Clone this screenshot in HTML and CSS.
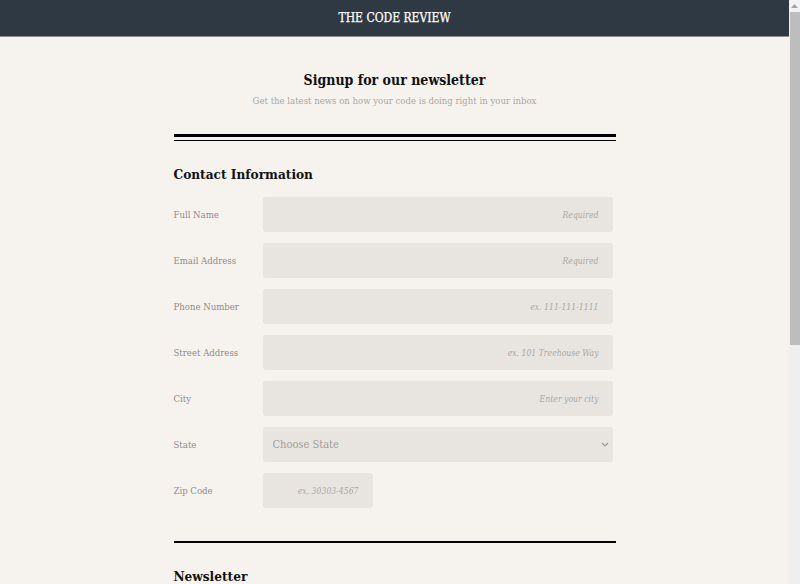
FILE: index.html
```html
<!DOCTYPE html>
<html lang="en">
<head>
<meta charset="utf-8">
<title>The Code Review</title>
<link rel="stylesheet" href="styles.css">
</head>
<body>
<div class="window">
  <div class="viewport">
    <header class="topbar">
      <span class="brand">THE CODE REVIEW</span>
    </header>
    <main class="container">
      <div class="intro">
        <h1 class="title">Signup for our newsletter</h1>
        <p class="subtitle">Get the latest news on how your code is doing right in your inbox</p>
      </div>
      <div class="double-rule"></div>

      <form class="form">
        <section class="section">
          <h2 class="section-title">Contact Information</h2>
          <div class="row">
            <label class="label" for="name">Full Name</label>
            <input class="field" id="name" type="text" placeholder="Required">
          </div>
          <div class="row">
            <label class="label" for="email">Email Address</label>
            <input class="field" id="email" type="email" placeholder="Required">
          </div>
          <div class="row">
            <label class="label" for="phone">Phone Number</label>
            <input class="field" id="phone" type="tel" placeholder="ex. 111-111-1111">
          </div>
          <div class="row">
            <label class="label" for="street">Street Address</label>
            <input class="field" id="street" type="text" placeholder="ex. 101 Treehouse Way">
          </div>
          <div class="row">
            <label class="label" for="city">City</label>
            <input class="field" id="city" type="text" placeholder="Enter your city">
          </div>
          <div class="row">
            <label class="label" for="state">State</label>
            <div class="select-wrap">
              <select class="field select" id="state">
                <option>Choose State</option>
              </select>
              <svg class="chevron" width="8" height="5" viewBox="0 0 8 5"><path d="M1 1 L4 4 L7 1" fill="none" stroke="#9a9692" stroke-width="1.1"/></svg>
            </div>
          </div>
          <div class="row last">
            <label class="label" for="zip">Zip Code</label>
            <input class="field zip" id="zip" type="text" placeholder="ex. 30303-4567">
          </div>
        </section>

        <div class="single-rule"></div>

        <section class="section">
          <h2 class="section-title">Newsletter</h2>
          <p class="question">Select the newsletters you would like to receive</p>
          <ul class="options">
            <li><label><input type="checkbox"> HTML News</label></li>
            <li><label><input type="checkbox"> CSS News</label></li>
            <li><label><input type="checkbox"> Javascript News</label></li>
          </ul>
          <p class="question">Newsletter format</p>
          <ul class="options">
            <li><label><input type="radio" name="fmt"> HTML</label></li>
            <li><label><input type="radio" name="fmt"> Plain text</label></li>
          </ul>
          <p class="question">Other topics you'd like to hear about</p>
          <textarea class="field area"></textarea>
          <button class="submit" type="button">Sign Up</button>
        </section>
      </form>
    </main>
  </div>
  <div class="scrollbar">
    <div class="scroll-btn">
      <svg width="7" height="4" viewBox="0 0 7 4"><path d="M0 4 L3.5 0 L7 4 Z" fill="#a3a3a3"/></svg>
    </div>
    <div class="scroll-thumb"></div>
  </div>
</div>
</body>
</html>
```

FILE: styles.css
```css
* { box-sizing: border-box; }

html, body {
  margin: 0;
  padding: 0;
  overflow: hidden;
}

body {
  background: #f6f3ef;
  font-family: "DejaVu Serif Condensed", "DejaVu Serif", "Liberation Serif", serif;
  color: #111;
}

.window {
  display: flex;
  height: 584px;
}

.viewport {
  flex: 1;
  height: 584px;
  overflow: hidden;
}

.topbar {
  height: 37px;
  background: #2f3943;
  border-bottom: 1px solid #8b9096;
  display: flex;
  align-items: center;
  justify-content: center;
}

.brand {
  color: #fff;
  font-size: 12px;
  -webkit-text-stroke: 0.25px #fff;
}

.container {
  width: 442px;
  margin: 0 auto;
}

.intro {
  text-align: center;
  padding-top: 33px;
}

.title {
  margin: 0;
  font-size: 14px;
  line-height: 20px;
  font-weight: bold;
}

.subtitle {
  margin: 4px 0 0;
  font-size: 9.5px;
  line-height: 14px;
  color: #aaa6a2;
}

.double-rule {
  margin-top: 26px;
  height: 7px;
  border-top: 3px solid #000;
  border-bottom: 1px solid #000;
}

.form {
  margin: 0;
}

.section-title {
  margin: 23px 0 13px;
  font-size: 13.5px;
  line-height: 20px;
  font-weight: bold;
}

.row {
  display: grid;
  grid-template-columns: 89px 350px;
  align-items: center;
  margin-bottom: 11px;
}

.row.last {
  margin-bottom: 0;
}

.label {
  font-size: 9.5px;
  color: #8f8b87;
}

.field {
  display: block;
  width: 100%;
  height: 35px;
  border: none;
  border-radius: 3px;
  background: #e8e5e1;
  font-family: "DejaVu Serif Condensed", "DejaVu Serif", "Liberation Serif", serif;
  font-size: 8.6px;
  padding: 0 14px;
  text-align: right;
  color: #555;
  outline: none;
}

.field::placeholder {
  color: #aaa7a3;
  font-style: italic;
}

.select-wrap {
  position: relative;
}

.select {
  appearance: none;
  -webkit-appearance: none;
  text-align: left;
  padding: 0 10px;
  font-size: 11px;
  color: #a19d99;
}

.chevron {
  position: absolute;
  right: 4px;
  top: 15px;
}

.zip {
  width: 110px;
}

.single-rule {
  margin-top: 33px;
  border-top: 2px solid #000;
}

.question {
  margin: 0 0 10px;
  font-size: 10px;
  color: #8f8b87;
}

.options {
  list-style: none;
  margin: 0 0 26px;
  padding: 0;
}

.options li {
  font-size: 10px;
  color: #555;
  margin-bottom: 10px;
}

.area {
  height: 110px;
  resize: none;
  margin-bottom: 30px;
}

.submit {
  display: block;
  margin: 0 auto 80px;
  background: #2f3943;
  color: #fff;
  border: none;
  border-radius: 3px;
  font-family: "DejaVu Serif Condensed", "DejaVu Serif", "Liberation Serif", serif;
  font-size: 12px;
  padding: 12px 40px;
}

.scrollbar {
  width: 11px;
  height: 584px;
  background: #efefef;
  display: flex;
  flex-direction: column;
}

.scroll-btn {
  height: 12px;
  display: flex;
  align-items: center;
  justify-content: center;
  background: #f3f3f3;
}

.scroll-thumb {
  height: 333px;
  background: #bdbdbd;
  margin-left: 1px;
}
```
